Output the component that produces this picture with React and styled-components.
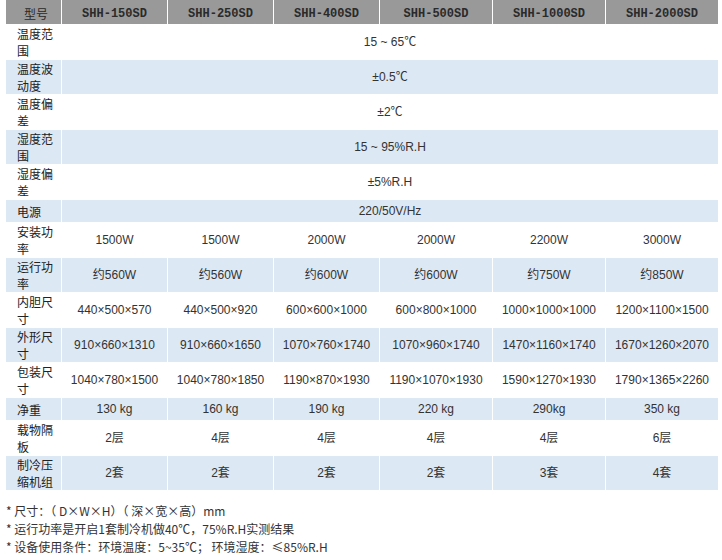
import React from "react";
import styled, { createGlobalStyle } from "styled-components";

const GlobalStyle = createGlobalStyle`
  html, body {
    margin: 0;
    padding: 0;
    background: #fff;
  }
  body {
    font-family: "Liberation Sans", "Noto Sans CJK SC", sans-serif;
    color: #333;
  }
`;

const models = ["SHH-150SD", "SHH-250SD", "SHH-400SD", "SHH-500SD", "SHH-1000SD", "SHH-2000SD"];

// span: 一个值占满整行
const rows = [
  { label: "温度范围", span: "15 ~ 65℃" },
  { label: "温度波动度", span: "±0.5℃" },
  { label: "温度偏差", span: "±2℃" },
  { label: "湿度范围", span: "15 ~ 95%R.H" },
  { label: "湿度偏差", span: "±5%R.H" },
  { label: "电源", span: "220/50V/Hz" },
  { label: "安装功率", values: ["1500W", "1500W", "2000W", "2000W", "2200W", "3000W"] },
  { label: "运行功率", values: ["约560W", "约560W", "约600W", "约600W", "约750W", "约850W"] },
  {
    label: "内胆尺寸",
    values: ["440×500×570", "440×500×920", "600×600×1000", "600×800×1000", "1000×1000×1000", "1200×1100×1500"],
  },
  {
    label: "外形尺寸",
    values: ["910×660×1310", "910×660×1650", "1070×760×1740", "1070×960×1740", "1470×1160×1740", "1670×1260×2070"],
  },
  {
    label: "包装尺寸",
    values: ["1040×780×1500", "1040×780×1850", "1190×870×1930", "1190×1070×1930", "1590×1270×1930", "1790×1365×2260"],
  },
  { label: "净重", values: ["130 kg", "160 kg", "190 kg", "220 kg", "290kg", "350 kg"] },
  { label: "载物隔板", values: ["2层", "4层", "4层", "4层", "4层", "6层"] },
  { label: "制冷压缩机组", values: ["2套", "2套", "2套", "2套", "3套", "4套"] },
];

const notes = [
  "* 尺寸：（ D×W×H）（ 深×宽×高）mm",
  "* 运行功率是开启1套制冷机做40℃，75%R.H实测结果",
  "* 设备使用条件：环境温度：5~35℃； 环境湿度：≤85%R.H",
];

const App = () => {
  return (
    <Page>
      <GlobalStyle />
      <SpecTable>
        <HeadCell $cjk>型号</HeadCell>
        {models.map((m) => (
          <HeadCell key={m}>{m}</HeadCell>
        ))}
        {rows.map((row, i) => {
          const blue = i % 2 === 1;
          return (
            <React.Fragment key={row.label}>
              <LabelCell $blue={blue}>{row.label}</LabelCell>
              {row.span ? (
                <ValueCell $blue={blue} $wide>
                  {row.span}
                </ValueCell>
              ) : (
                row.values.map((v, j) => (
                  <ValueCell key={j} $blue={blue}>
                    {v}
                  </ValueCell>
                ))
              )}
            </React.Fragment>
          );
        })}
      </SpecTable>
      <Notes>
        {notes.map((n) => (
          <Note key={n}>{n}</Note>
        ))}
      </Notes>
    </Page>
  );
};

export default App;

const Page = styled.div`
  width: 722px;
  padding-left: 6px;
  box-sizing: border-box;
`;

const SpecTable = styled.div`
  display: grid;
  grid-template-columns: 55px repeat(3, 105px) repeat(3, 112px);
  grid-auto-rows: auto;
  gap: 1px;
  width: max-content;
`;

const HeadCell = styled.div`
  height: 24px;
  display: flex;
  align-items: center;
  justify-content: center;
  box-sizing: border-box;
  padding-top: 3px;
  padding-left: ${(p) => (p.$cjk ? "5px" : "0")};
  background: #999999;
  color: #2a2a2a;
  font-family: ${(p) =>
    p.$cjk ? `"Noto Sans CJK SC", sans-serif` : `"Liberation Mono", "Courier New", monospace`};
  font-weight: ${(p) => (p.$cjk ? 400 : 700)};
  font-size: 12px;
`;

const LabelCell = styled.div`
  min-height: 22px;
  display: flex;
  align-items: center;
  padding-left: 11px;
  box-sizing: border-box;
  background: ${(p) => (p.$blue ? "#dce8f4" : "#fff")};
  font-family: "Noto Sans CJK SC", sans-serif;
  font-size: 12px;
  line-height: 17px;
  color: #222;
  word-break: break-all;
`;

const ValueCell = styled.div`
  grid-column: ${(p) => (p.$wide ? "2 / -1" : "auto")};
  display: flex;
  align-items: center;
  justify-content: center;
  background: ${(p) => (p.$blue ? "#dce8f4" : "#fff")};
  font-family: "Liberation Sans", "Noto Sans CJK SC", sans-serif;
  font-size: 12px;
  line-height: 17px;
  color: #333;
  white-space: nowrap;
`;

const Notes = styled.div`
  margin-top: 12px;
`;

const Note = styled.div`
  font-family: "Noto Sans CJK SC", sans-serif;
  font-size: 12px;
  line-height: 18px;
  color: #333;
`;
